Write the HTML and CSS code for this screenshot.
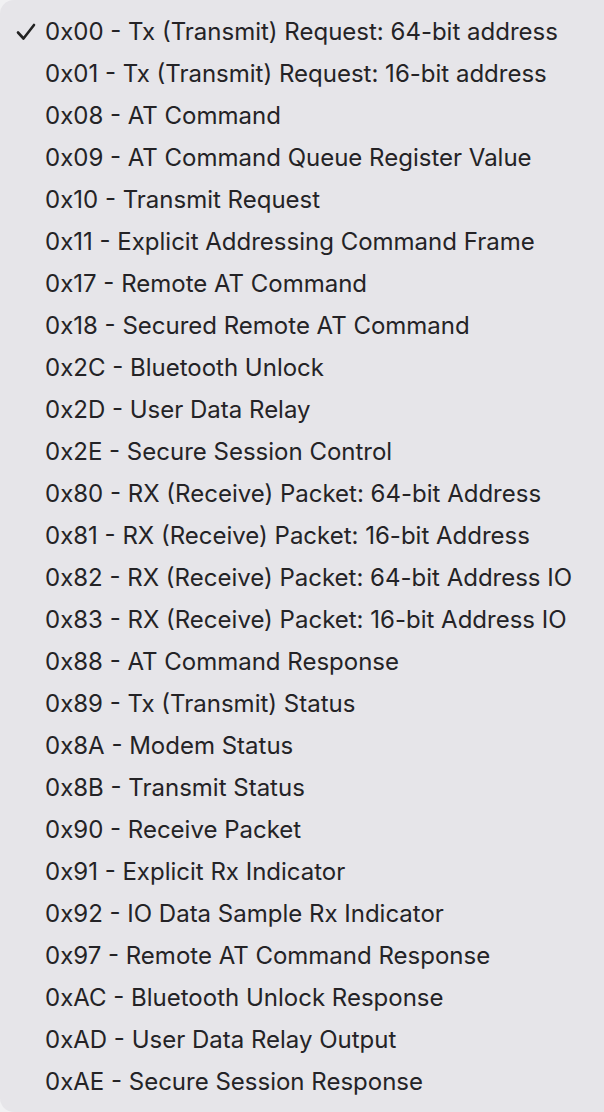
FILE: index.html
```html
<!DOCTYPE html>
<html lang="en">
<head>
  <meta charset="UTF-8" />
  <title>API Frame Type</title>
  <link rel="stylesheet" href="styles.css">
</head>
<body>
  <ul class="menu">
    <li class="menu-item checked">
      <svg class="check" viewBox="0 0 20 18" width="20" height="18"><path d="M2 9.5 L7.5 15.5 L18 2" fill="none" stroke="#222" stroke-width="2.6" stroke-linecap="round" stroke-linejoin="round"/></svg>
      <span>0x00 - Tx (Transmit) Request: 64-bit address</span>
    </li>
    <li class="menu-item"><span>0x01 - Tx (Transmit) Request: 16-bit address</span></li>
    <li class="menu-item"><span>0x08 - AT Command</span></li>
    <li class="menu-item"><span>0x09 - AT Command Queue Register Value</span></li>
    <li class="menu-item"><span>0x10 - Transmit Request</span></li>
    <li class="menu-item"><span>0x11 - Explicit Addressing Command Frame</span></li>
    <li class="menu-item"><span>0x17 - Remote AT Command</span></li>
    <li class="menu-item"><span>0x18 - Secured Remote AT Command</span></li>
    <li class="menu-item"><span>0x2C - Bluetooth Unlock</span></li>
    <li class="menu-item"><span>0x2D - User Data Relay</span></li>
    <li class="menu-item"><span>0x2E - Secure Session Control</span></li>
    <li class="menu-item"><span>0x80 - RX (Receive) Packet: 64-bit Address</span></li>
    <li class="menu-item"><span>0x81 - RX (Receive) Packet: 16-bit Address</span></li>
    <li class="menu-item"><span>0x82 - RX (Receive) Packet: 64-bit Address IO</span></li>
    <li class="menu-item"><span>0x83 - RX (Receive) Packet: 16-bit Address IO</span></li>
    <li class="menu-item"><span>0x88 - AT Command Response</span></li>
    <li class="menu-item"><span>0x89 - Tx (Transmit) Status</span></li>
    <li class="menu-item"><span>0x8A - Modem Status</span></li>
    <li class="menu-item"><span>0x8B - Transmit Status</span></li>
    <li class="menu-item"><span>0x90 - Receive Packet</span></li>
    <li class="menu-item"><span>0x91 - Explicit Rx Indicator</span></li>
    <li class="menu-item"><span>0x92 - IO Data Sample Rx Indicator</span></li>
    <li class="menu-item"><span>0x97 - Remote AT Command Response</span></li>
    <li class="menu-item"><span>0xAC - Bluetooth Unlock Response</span></li>
    <li class="menu-item"><span>0xAD - User Data Relay Output</span></li>
    <li class="menu-item"><span>0xAE - Secure Session Response</span></li>
  </ul>
</body>
</html>
```

FILE: styles.css
```css
body {
  margin: 0;
  background: #f1f1f3;
  font-family: Inter, "Noto Sans", sans-serif;
  overflow: hidden;
}

.menu {
  list-style: none;
  margin: 0;
  padding: 10px 0;
  height: 1112px;
  box-sizing: border-box;
  background: #e6e5e9;
  border-radius: 14px 0 0 14px;
}

.menu-item {
  display: flex;
  align-items: center;
  height: 42px;
  padding-left: 45px;
  position: relative;
  font-size: 24px;
  color: #242326;
  white-space: nowrap;
}

.check {
  position: absolute;
  left: 16px;
  top: 13px;
}
```
